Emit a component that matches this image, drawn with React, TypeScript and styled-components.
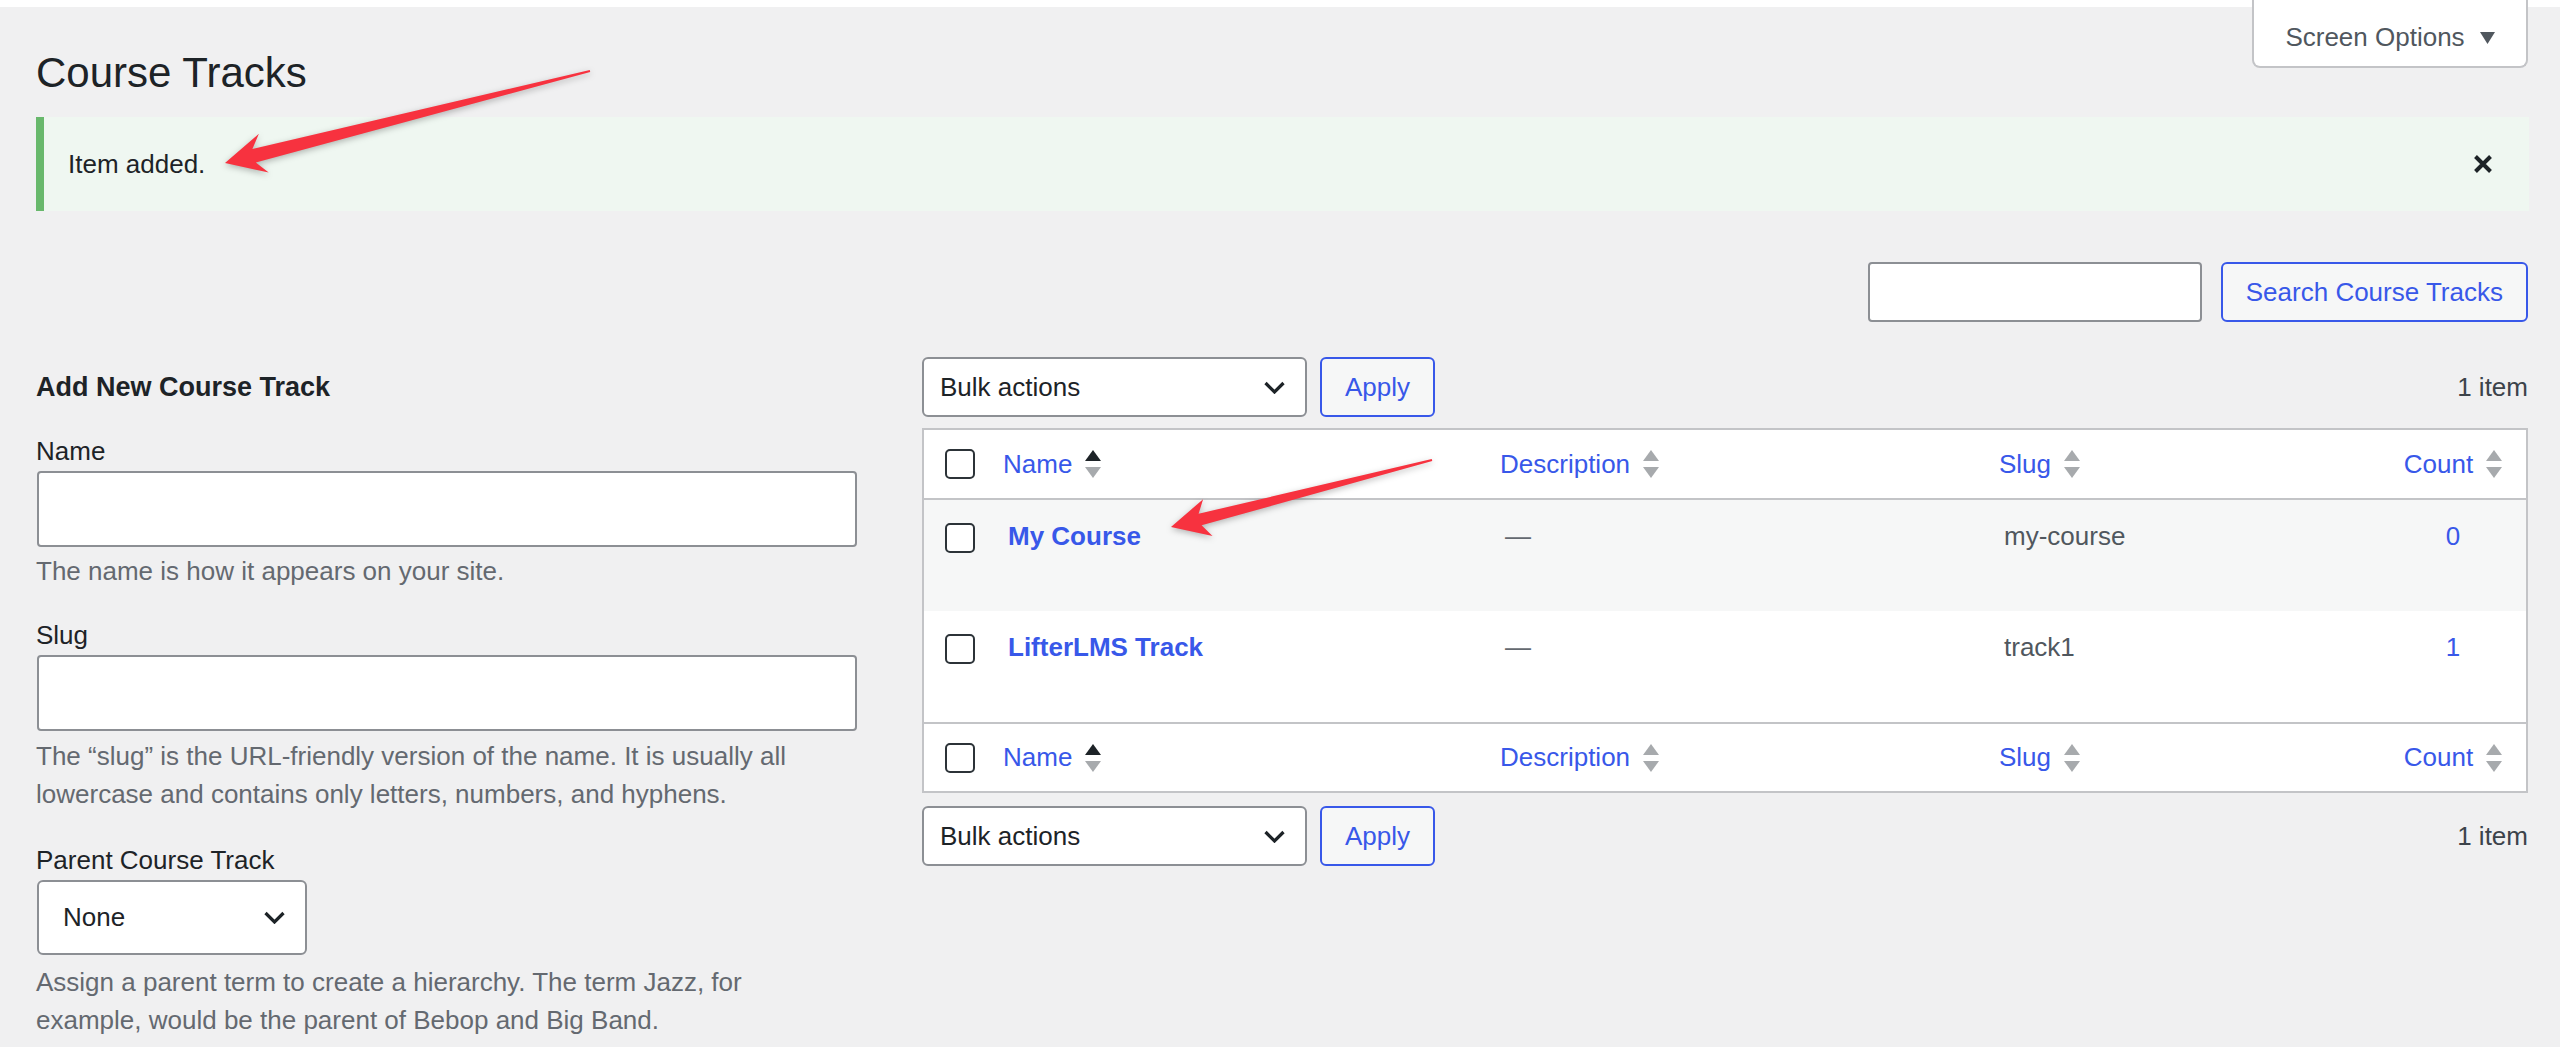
import React from 'react';
import styled, { createGlobalStyle } from 'styled-components';

const BLUE = '#3858e9';
const INK = '#1d2327';
const FONT = '"Liberation Sans", Arial, Helvetica, sans-serif';

const GlobalStyle = createGlobalStyle`
  html, body { margin: 0; padding: 0; }
  body {
    background: #f0f0f1;
    font-family: ${FONT};
    color: #3c434a;
  }
  *, *::before, *::after { box-sizing: border-box; }
`;

const Page = styled.div`
  position: relative;
  width: 2560px;
  min-height: 1047px;
  overflow: hidden;
  background: linear-gradient(#fff 0 7px, #f0f0f1 7px);
`;

/* ---------- header ---------- */
const Header = styled.header`
  display: flex;
  justify-content: space-between;
  align-items: flex-start;
  padding: 0 32px 0 36px;
`;

const Title = styled.h1`
  margin: 45px 0 0;
  font-size: 42px;
  line-height: 55px;
  font-weight: 400;
  color: ${INK};
`;

const ScreenOptions = styled.button`
  display: flex;
  align-items: center;
  justify-content: center;
  gap: 15px;
  width: 276px;
  height: 68px;
  padding: 9px 0 0;
  background: #fff;
  border: 2px solid #c3c4c7;
  border-top: none;
  border-radius: 0 0 8px 8px;
  font: 26px ${FONT};
  color: #50575e;
`;

/* ---------- notice ---------- */
const Notice = styled.div`
  display: flex;
  align-items: center;
  justify-content: space-between;
  height: 94px;
  margin: 17px 31px 0 36px;
  padding: 0 36px 0 24px;
  background: #eff7f1;
  border-left: 8px solid #68b86c;
`;

const NoticeText = styled.p`
  margin: 0;
  font-size: 26px;
  line-height: 39px;
  color: ${INK};
`;

/* ---------- search ---------- */
const SearchRow = styled.div`
  display: flex;
  justify-content: flex-end;
  gap: 19px;
  margin-top: 51px;
  padding-right: 32px;
`;

const SearchInput = styled.input`
  width: 334px;
  height: 60px;
  background: #fff;
  border: 2px solid #8c8f94;
  border-radius: 4px;
  font: 26px ${FONT};
`;

const Button = styled.button`
  height: 60px;
  padding: 0 23px;
  background: #f6f7f7;
  border: 2px solid ${BLUE};
  border-radius: 6px;
  font: 26px ${FONT};
  color: ${BLUE};
  white-space: nowrap;
`;

/* ---------- columns ---------- */
const Columns = styled.div`
  display: flex;
  margin-top: 35px;
  padding-left: 36px;
`;

const LeftCol = styled.section`
  width: 886px;
  flex: none;
`;

const RightCol = styled.section`
  flex: 1;
  padding-right: 32px;
`;

const FormTitle = styled.h2`
  margin: 12px 0 0;
  font-size: 27px;
  line-height: 36px;
  font-weight: 700;
  color: ${INK};
`;

const Field = styled.div<{ $top: number }>`
  margin-top: ${(p) => p.$top}px;
`;

const Label = styled.label`
  display: block;
  font-size: 26px;
  line-height: 39px;
  color: ${INK};
`;

const TextInput = styled.input`
  display: block;
  width: 820px;
  height: 76px;
  margin: 0 0 0 1px;
  background: #fff;
  border: 2px solid #8c8f94;
  border-radius: 4px;
  font: 26px ${FONT};
`;

const Description = styled.p<{ $top: number }>`
  margin: ${(p) => p.$top}px 0 0;
  max-width: 860px;
  font-size: 26px;
  line-height: 38px;
  color: #646970;
`;

const SelectBox = styled.div<{ $w: number; $h: number; $pl: number; $indent?: boolean }>`
  display: flex;
  align-items: center;
  justify-content: space-between;
  width: ${(p) => p.$w}px;
  height: ${(p) => p.$h}px;
  margin-left: ${(p) => (p.$indent ? 1 : 0)}px;
  padding: 0 20px 0 ${(p) => p.$pl}px;
  background: #fff;
  border: 2px solid #8c8f94;
  border-radius: 6px;
  font-size: 26px;
  color: ${INK};
  flex: none;
`;

const Chevron = () => (
  <svg width="21" height="13" viewBox="0 0 21 13" aria-hidden="true">
    <polyline points="1.5,2 10.5,11 19.5,2" fill="none" stroke={INK} strokeWidth="3.2" />
  </svg>
);

/* ---------- table nav ---------- */
const TableNav = styled.div<{ $top?: number }>`
  display: flex;
  align-items: center;
  gap: 13px;
  height: 60px;
  margin-top: ${(p) => p.$top ?? 0}px;
`;

const ItemCount = styled.span`
  margin-left: auto;
  font-size: 26px;
  color: #3c434a;
`;

/* ---------- list table ---------- */
const Table = styled.div`
  margin-top: 11px;
  background: #fff;
  border: 2px solid #c3c4c7;
`;

const Row = styled.div<{ $kind: 'head' | 'foot' | 'body'; $alt?: boolean }>`
  display: grid;
  grid-template-columns: 64px 497px 499px 396px 1fr;
  align-items: ${(p) => (p.$kind === 'body' ? 'start' : 'center')};
  height: ${(p) => (p.$kind === 'head' ? 70 : p.$kind === 'foot' ? 69 : 111)}px;
  background: ${(p) => (p.$alt ? '#f6f7f7' : '#fff')};
  border-bottom: ${(p) => (p.$kind === 'head' ? '2px solid #c3c4c7' : 'none')};
  border-top: ${(p) => (p.$kind === 'foot' ? '2px solid #c3c4c7' : 'none')};
`;

const CheckCell = styled.div<{ $body?: boolean }>`
  padding: ${(p) => (p.$body ? '23px' : '0')} 0 0 21px;
  display: flex;
`;

const CheckBox = styled.span`
  display: block;
  width: 30px;
  height: 30px;
  border: 2px solid #2c3338;
  border-radius: 5px;
  background: #fff;
`;

const HeadCell = styled.div<{ $center?: boolean }>`
  display: flex;
  align-items: center;
  justify-content: ${(p) => (p.$center ? 'center' : 'flex-start')};
  gap: 13px;
  padding-left: ${(p) => (p.$center ? 0 : 15)}px;
  font-size: 26px;
  line-height: 39px;
  color: ${BLUE};
`;

const Cell = styled.div<{ $center?: boolean; $tone?: 'link' | 'muted' | 'text' }>`
  padding: 17px 0 0 ${(p) => (p.$center ? 0 : 20)}px;
  text-align: ${(p) => (p.$center ? 'center' : 'left')};
  font-size: 26px;
  line-height: 39px;
  color: ${(p) => (p.$tone === 'link' ? BLUE : p.$tone === 'muted' ? '#646970' : '#50575e')};
`;

const RowTitle = styled.a`
  font-weight: 700;
  color: ${BLUE};
  text-decoration: none;
`;

const SortArrows = ({ active }: { active?: boolean }) => (
  <svg width="16" height="28" viewBox="0 0 16 28" aria-hidden="true">
    <polygon points="0,11 8,0 16,11" fill={active ? INK : '#a7aaad'} />
    <polygon points="0,17 16,17 8,28" fill="#a7aaad" />
  </svg>
);

/* ---------- annotation overlay ---------- */
const Overlay = styled.svg`
  position: absolute;
  left: 0;
  top: 0;
  width: 2560px;
  height: 1047px;
  pointer-events: none;
  filter: drop-shadow(0 2px 3px rgba(0, 0, 0, 0.28));
`;

const HeaderCells = () => (
  <>
    <CheckCell>
      <CheckBox />
    </CheckCell>
    <HeadCell>
      Name <SortArrows active />
    </HeadCell>
    <HeadCell>
      Description <SortArrows />
    </HeadCell>
    <HeadCell>
      Slug <SortArrows />
    </HeadCell>
    <HeadCell $center>
      Count <SortArrows />
    </HeadCell>
  </>
);

const rows = [
  { name: 'My Course', slug: 'my-course', count: '0' },
  { name: 'LifterLMS Track', slug: 'track1', count: '1' },
];

export default function App() {
  return (
    <>
      <GlobalStyle />
      <Page>
        <Header>
          <Title>Course Tracks</Title>
          <ScreenOptions type="button">
            Screen Options
            <svg width="15" height="12" viewBox="0 0 15 12" aria-hidden="true">
              <polygon points="0,0 15,0 7.5,12" fill="#50575e" />
            </svg>
          </ScreenOptions>
        </Header>

        <Notice>
          <NoticeText>Item added.</NoticeText>
          <svg width="20" height="18" viewBox="0 0 20 18" aria-hidden="true">
            <path d="M2.5 1.5 L17.5 16.5 M17.5 1.5 L2.5 16.5" stroke={INK} strokeWidth="4" fill="none" />
          </svg>
        </Notice>

        <SearchRow>
          <SearchInput type="search" aria-label="Search Course Tracks" />
          <Button type="button">Search Course Tracks</Button>
        </SearchRow>

        <Columns>
          <LeftCol>
            <FormTitle>Add New Course Track</FormTitle>
            <Field $top={27}>
              <Label>Name</Label>
              <TextInput type="text" />
              <Description $top={5}>The name is how it appears on your site.</Description>
            </Field>
            <Field $top={26}>
              <Label>Slug</Label>
              <TextInput type="text" />
              <Description $top={6}>
                The “slug” is the URL-friendly version of the name. It is usually all
                <br />
                lowercase and contains only letters, numbers, and hyphens.
              </Description>
            </Field>
            <Field $top={28}>
              <Label>Parent Course Track</Label>
              <SelectBox $w={270} $h={75} $pl={24} $indent>
                None
                <Chevron />
              </SelectBox>
              <Description $top={8}>
                Assign a parent term to create a hierarchy. The term Jazz, for
                <br />
                example, would be the parent of Bebop and Big Band.
              </Description>
            </Field>
          </LeftCol>

          <RightCol>
            <TableNav>
              <SelectBox $w={385} $h={60} $pl={16}>
                Bulk actions
                <Chevron />
              </SelectBox>
              <Button type="button">Apply</Button>
              <ItemCount>1 item</ItemCount>
            </TableNav>

            <Table role="table">
              <Row $kind="head" role="row">
                <HeaderCells />
              </Row>
              {rows.map((r, i) => (
                <Row key={r.slug} $kind="body" $alt={i % 2 === 0} role="row">
                  <CheckCell $body>
                    <CheckBox />
                  </CheckCell>
                  <Cell>
                    <RowTitle href="#">{r.name}</RowTitle>
                  </Cell>
                  <Cell $tone="muted">—</Cell>
                  <Cell>{r.slug}</Cell>
                  <Cell $center $tone="link">
                    {r.count}
                  </Cell>
                </Row>
              ))}
              <Row $kind="foot" role="row">
                <HeaderCells />
              </Row>
            </Table>

            <TableNav $top={13}>
              <SelectBox $w={385} $h={60} $pl={16}>
                Bulk actions
                <Chevron />
              </SelectBox>
              <Button type="button">Apply</Button>
              <ItemCount>1 item</ItemCount>
            </TableNav>
          </RightCol>
        </Columns>

        <Overlay viewBox="0 0 2560 1047" aria-hidden="true">
          <polygon
            fill="#f7323f"
            points="225,163 268.7,172.6 255.8,162.5 590.2,72 589.8,70 252.4,148.9 258.9,133.8"
          />
          <polygon
            fill="#f7323f"
            points="1171,527 1212.5,536 1201.6,525.3 1432.25,461 1431.75,459 1198.6,513.7 1203.1,499.2"
          />
        </Overlay>
      </Page>
    </>
  );
}
